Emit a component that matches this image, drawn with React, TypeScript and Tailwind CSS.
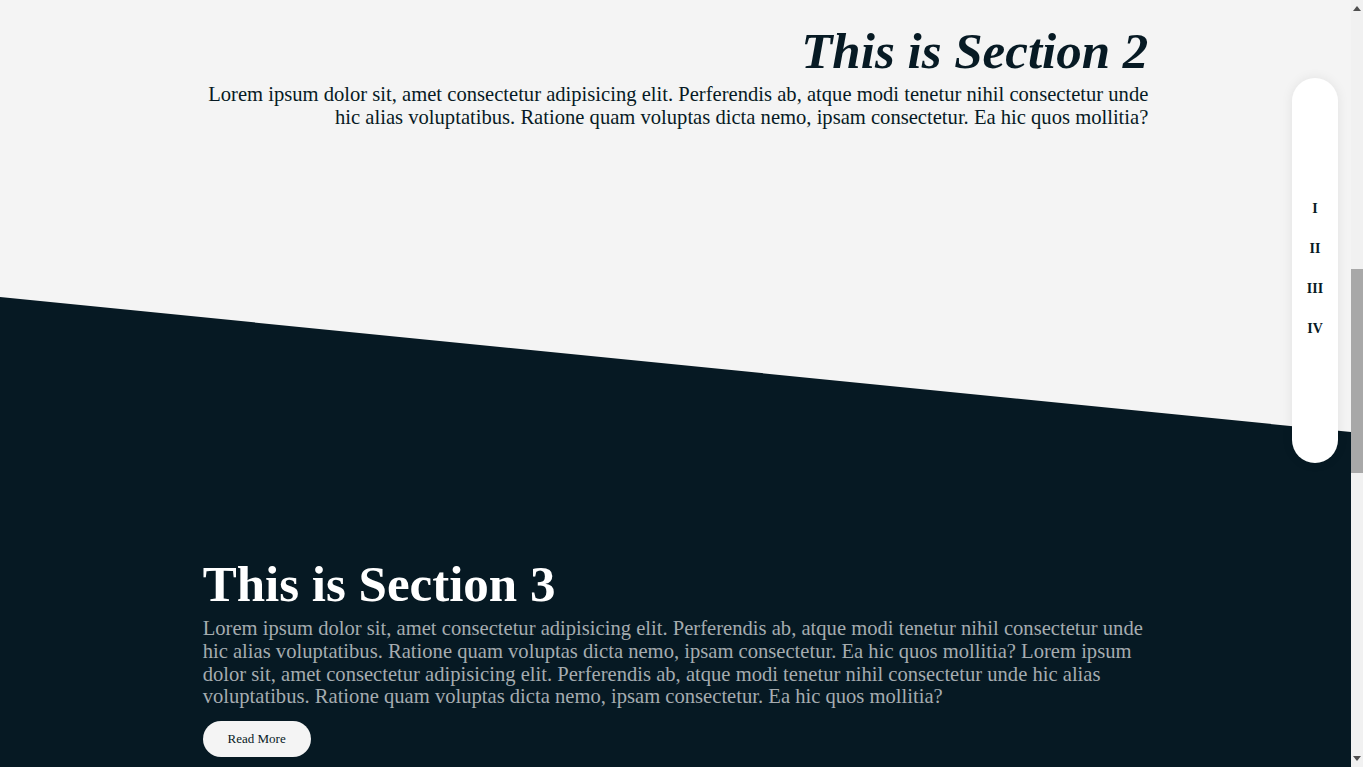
import React from "react";

const lorem =
  "Lorem ipsum dolor sit, amet consectetur adipisicing elit. Perferendis ab, atque modi tenetur nihil consectetur unde hic alias voluptatibus. Ratione quam voluptas dicta nemo, ipsam consectetur. Ea hic quos mollitia?";

export default function App() {
  return (
    <div
      className="flex h-[767px] w-full overflow-hidden bg-[#f4f4f4]"
      style={{ fontFamily: '"Liberation Serif", "Times New Roman", serif' }}
    >
      <main className="relative flex min-w-0 flex-1 flex-col">
        <section className="h-[297px] shrink-0 bg-[#f4f4f4]">
          <div className="mx-auto w-[70%] pt-[22px] text-right text-[#071a24]">
            <h2 className="text-[51px] font-bold italic leading-[normal]">This is Section 2</h2>
            <p className="mt-[3px] text-[20.6px] leading-[22.8px]">{lorem}</p>
          </div>
        </section>
        <section className="flex-1 bg-[#061923] [clip-path:polygon(0_0,100%_135px,100%_100%,0_100%)]">
          <div className="mx-auto w-[70%] pt-[258px]">
            <h2 className="text-[51px] font-bold leading-[normal] text-white">This is Section 3</h2>
            <p className="mt-[4px] text-[20.6px] leading-[22.8px] text-[#a5acb0]">
              {lorem} {lorem}
            </p>
            <button className="mt-[13px] flex h-[36px] w-[108px] items-center justify-center rounded-full bg-[#f4f4f4] text-[13px] text-[#071a24]">
              Read More
            </button>
          </div>
        </section>
        <nav className="absolute right-[13px] top-[78px] flex h-[385px] w-[46px] flex-col items-center justify-center gap-[21px] rounded-full bg-white pb-[4px] shadow-[0_0_12px_rgba(0,0,0,0.08)]">
          {["I", "II", "III", "IV"].map((n) => (
            <span key={n} className="text-[14px] font-bold leading-[19px] text-[#071a24]">
              {n}
            </span>
          ))}
        </nav>
      </main>
      <div className="flex w-[12px] shrink-0 flex-col bg-[#f1f1f1]">
        <div className="flex h-[17px] items-center justify-center">
          <svg width="8" height="5" viewBox="0 0 8 5">
            <path d="M0 5 L4 0 L8 5 Z" fill="#505050" />
          </svg>
        </div>
        <div className="h-[252px]" />
        <div className="h-[204px] bg-[#a8a8a8]" />
        <div className="flex-1" />
        <div className="flex h-[17px] items-center justify-center">
          <svg width="8" height="5" viewBox="0 0 8 5">
            <path d="M0 0 L4 5 L8 0 Z" fill="#505050" />
          </svg>
        </div>
      </div>
    </div>
  );
}
